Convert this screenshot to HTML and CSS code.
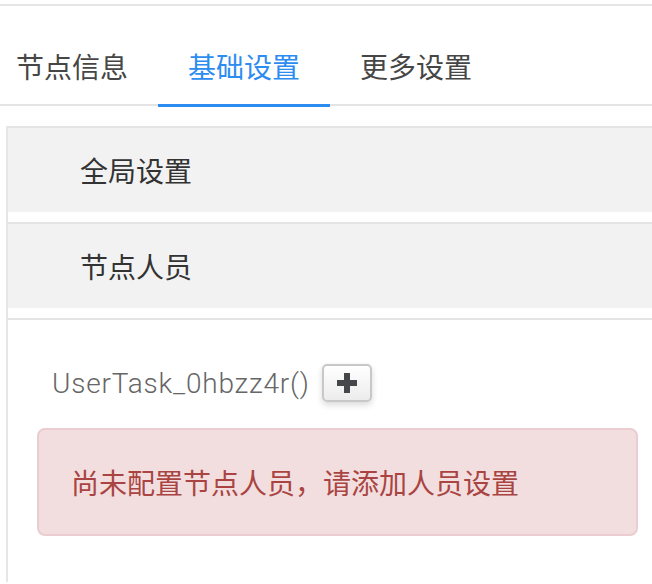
FILE: index.html
```html
<!DOCTYPE html>
<html lang="zh-CN">
<head>
    <meta charset="UTF-8">
    <meta name="viewport" content="width=device-width, initial-scale=1.0">
    <title>节点设置</title>
    <link rel="stylesheet" href="styles.css">
</head>
<body>

<div class="page">
    <!-- Вкладки -->
    <div class="tabs-bar">
        <div class="tab">节点信息</div>
        <div class="tab active">基础设置</div>
        <div class="tab">更多设置</div>
    </div>

    <!-- Панели -->
    <div class="panel-group">
        <div class="panel">
            <div class="panel-heading">全局设置</div>
        </div>
        <div class="panel">
            <div class="panel-heading">节点人员</div>
        </div>
        <div class="panel panel-open">
            <div class="panel-body">
                <div class="task-row">
                    <span class="task-name">UserTask_0hbzz4r()</span>
                    <button type="button" class="add-btn" title="添加">
                        <svg width="20" height="20" viewBox="0 0 20 20">
                            <path d="M10 0 V20 M0 10 H20" stroke="#45474b" stroke-width="6" fill="none"/>
                        </svg>
                    </button>
                </div>
                <div class="alert-danger">尚未配置节点人员，请添加人员设置</div>
            </div>
        </div>
    </div>
</div>

</body>
</html>
```

FILE: styles.css
```css
body {
    font-family: "Helvetica Neue", Roboto, "Noto Sans CJK SC", sans-serif;
    background-color: #fff;
    color: #333;
    margin: 0;
    padding: 0;
    overflow: hidden;
}
.page {
    margin-top: 4px;
    border-top: 2px solid #e6e6e6;
}
.tabs-bar {
    display: flex;
    margin-top: 26px;
    border-bottom: 2px solid #e4e4e4;
}
.tab {
    font-family: "Noto Sans CJK SC", sans-serif;
    font-size: 28px;
    line-height: 40px;
    color: #464646;
    padding: 14px 30px 18px;
    border-bottom: 3px solid transparent;
    margin-bottom: -3px;
}
.tab:first-child {
    padding-left: 16px;
}
.tab.active {
    color: #2d8cf0;
    border-bottom-color: #2d8cf0;
}

/* Панели */
.panel-group {
    margin: 20px -15px 0 6px;
}
.panel {
    border-top: 2px solid #e4e4e4;
    border-left: 2px solid #e6e6e6;
    padding-bottom: 10px;
}
.panel-heading {
    font-family: "Noto Sans CJK SC", sans-serif;
    font-size: 28px;
    line-height: 40px;
    padding: 22px 72px;
    background-color: #f2f2f2;
    color: #333;
}
.panel-open {
    padding-bottom: 0;
    height: 262px;
    overflow: hidden;
}
.panel-body {
    padding: 44px 29px 30px;
}
.task-row {
    display: flex;
    align-items: center;
    gap: 12px;
    padding-left: 15px;
}
.task-name {
    font-size: 28px;
    font-weight: 300;
    letter-spacing: 0.8px;
    color: #666;
}
.add-btn {
    width: 50px;
    height: 38px;
    border: 2px solid #c8c8c8;
    border-radius: 5px;
    background: linear-gradient(#fff, #ececec);
    box-shadow: 0 3px 6px rgba(0, 0, 0, 0.15);
    display: flex;
    align-items: center;
    justify-content: center;
    padding: 0;
    cursor: pointer;
}
.alert-danger {
    margin-top: 26px;
    padding: 32px;
    border: 2px solid #ebccd1;
    border-radius: 8px;
    background-color: #f2dede;
    color: #a94442;
    font-family: "Noto Sans CJK SC", sans-serif;
    font-size: 28px;
    line-height: 40px;
}
```
